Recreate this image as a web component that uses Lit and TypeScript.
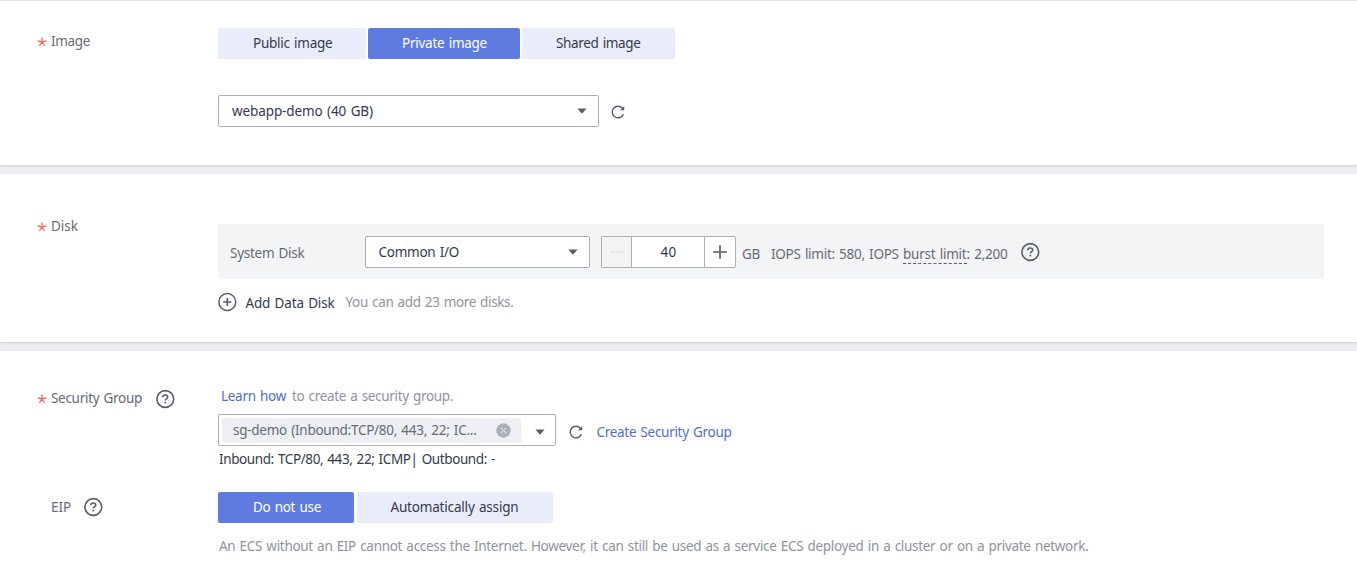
import { LitElement, html, css } from "lit";
import { customElement, property } from "lit/decorators.js";

/** One line of text whose tracking is adjusted so that it spans a given width. */
@customElement("fit-text")
class FitText extends LitElement {
  @property({ type: Number }) span = 0;
  static styles = css`
    :host { display: block; flex: none; height: 20px; line-height: 20px; white-space: pre; }
    .line { display: inline-block; word-spacing: 1px; }
  `;
  render() {
    return html`<span class="line"><slot></slot></span>`;
  }
  firstUpdated() {
    const line = this.renderRoot.querySelector(".line") as HTMLElement;
    const count = (this.textContent || "").length;
    const natural = line.getBoundingClientRect().width;
    this.style.width = `${this.span}px`;
    line.style.letterSpacing = `${(this.span - natural) / count}px`;
  }
}

const star = html`<svg class="star" width="10" height="10" viewBox="0 0 10 10">
  <path d="M5 5V.4M5 5L.6 3.8M5 5l4.4-1.2M5 5L2.3 9M5 5l2.7 4" fill="none" stroke="#f4655f" stroke-width="1.3"/>
</svg>`;

const help = html`<svg class="icon" width="20" height="20" viewBox="0 0 20 20" fill="none" stroke="#575d6c">
  <circle cx="10.3" cy="10" r="8.4" stroke-width="1.6"/>
  <path d="M7.8 8.2C7.8 6.8 8.9 6 10.3 6s2.4.8 2.4 2.1c0 1.6-2.4 1.8-2.4 3.4" stroke-width="1.6"/>
  <path d="M10.3 12.8v1.6" stroke-width="1.7"/>
</svg>`;

const refresh = html`<svg class="icon" width="14" height="14" viewBox="0 0 14 14" fill="none">
  <path d="M12.4 9.2A5.8 5.8 0 1 1 11.4 3.2" stroke="#575d6c" stroke-width="1.4"/>
  <path d="M13.2 1v4.2H9.2z" fill="#575d6c"/>
</svg>`;

const caret = html`<svg class="caret" width="10" height="6" viewBox="0 0 10 6"><path d="M.4.4h9.2L5 5.8z" fill="#575d6c"/></svg>`;

const plusCircle = html`<svg class="icon" width="20" height="20" viewBox="0 0 20 20" fill="none" stroke="#575d6c">
  <circle cx="10.3" cy="10" r="8.4" stroke-width="1.5"/>
  <path d="M10.3 6v8M6.3 10h8" stroke-width="1.6"/>
</svg>`;

const clear = html`<svg class="clear" width="15" height="15" viewBox="0 0 15 15">
  <circle cx="7.5" cy="7.5" r="7.2" fill="#adb0b8"/>
  <path d="M4.8 4.8l5.4 5.4M10.2 4.8l-5.4 5.4" stroke="#eef0f5" stroke-width="1"/>
</svg>`;

@customElement("app-root")
class AppRoot extends LitElement {
  static styles = css`
    :host {
      display: block; height: 580px; overflow: hidden; background: #ecedf2;
      font-family: "Noto Sans", sans-serif; font-size: 13.5px; color: #343a4c;
    }
    * { box-sizing: border-box; }
    svg { display: block; flex: none; }
    .panel { background: #fff; display: grid; grid-template-columns: 218px 1fr; align-content: start; box-shadow: 0 1px 2px rgba(0,0,0,.12); margin-bottom: 9px; }
    .image { height: 165px; border-top: 1px solid #e4e5e9; }
    .disk { height: 168px; }
    .network { height: 229px; margin: 0; }
    .label { display: flex; align-items: flex-start; padding-left: 37px; color: #676b76; }
    .star { margin: 6px 4px 0 0; }
    .image .label { padding-top: 30px; }
    .disk .label { padding-top: 42px; }
    .sg-label { padding-top: 37px; }
    .eip-label { padding: 5px 0 0 51px; }
    .sg-label .icon { margin: 1px 0 0 12.5px; }
    .eip-label .icon { margin-left: 11.5px; }
    .image .body { padding-top: 27px; }
    .disk .body { padding-top: 50px; }
    .tabs { display: flex; gap: 2px; }
    .tabs.wide { gap: 3px; }
    .tab { height: 31px; display: flex; padding-top: 5px; background: #e9edfa; border-radius: 2px; }
    .tab.on { background: #5e7ce0; color: #fff; }
    .public { width: 148px; padding-left: 35px; }
    .private { width: 152px; padding-left: 34px; }
    .shared { width: 153px; padding-left: 34px; }
    .none { width: 136px; padding-left: 35px; }
    .auto { width: 196px; padding-left: 33.5px; }
    .field { display: flex; align-items: center; justify-content: space-between; height: 32px; padding: 0 11.5px 0 13px; background: #fff; border: 1px solid #adb0b8; border-radius: 2px; }
    .field.source { width: 381px; }
    .row { display: flex; align-items: center; }
    .source-row { margin-top: 36px; gap: 12px; }
    .source-row .icon { margin-top: 2px; }
    .bar { width: 1106px; height: 55px; background: #f3f4f6; padding-left: 12px; color: #676b76; }
    .bar > .sys { margin: 3px 0 0; width: 135px; }
    .io { width: 225px; color: #343a4c; padding-left: 12.5px; }
    .stepper { display: flex; width: 135px; height: 32px; margin-left: 11px; border: 1px solid #adb0b8; border-radius: 2px; background: #fff; color: #343a4c; }
    .step { width: 30px; display: grid; place-items: center; }
    .minus { background: #f3f4f6; width: 29px; }
    .count { width: 74px; border: solid #adb0b8; border-width: 0 1px; display: grid; place-items: center; padding-left: 1px; }
    .unit { margin: 5px 11px 0 6px; }
    .limit { display: flex; margin-top: 5px; }
    .burst { border-bottom: 1px dashed #575d6c; height: 20px; }
    .bar > .icon { margin: 1px 0 0 12.5px; }
    .add { margin-top: 12px; height: 22px; }
    .add .icon { margin-left: -1px; }
    .add-name { margin: 2px 11px 0 8.5px; }
    .muted { color: #8f939d; }
    .sg-body { padding-top: 35px; height: 141px; }
    .learn { display: flex; gap: 6px; padding-left: 3px; }
    .link { color: #526ecc; }
    .sg-field { width: 338px; padding: 0 10.5px 0 3px; }
    .sg-field .caret { margin-top: 3px; }
    .sg-row { margin-top: 8px; }
    .tag { display: flex; align-items: center; justify-content: space-between; width: 299px; height: 25px; padding: 0 10px 0 11px; background: #edeff4; border-radius: 2px; color: #676b76; }
    .sg-row .icon { margin: 4px 14px 0 12.5px; }
    .sg-row .link { margin-top: 4px; }
    .rules { margin: 3px 0 0 1px; }
    .note { margin: 13px 0 0 1px; }
  `;

  render() {
    return html`
      <section class="panel image">
        <div class="label">${star}<fit-text span="39">Image</fit-text></div>
        <div class="body">
          <div class="tabs">
            <div class="tab public"><fit-text span="79.5">Public image</fit-text></div>
            <div class="tab on private"><fit-text span="85">Private image</fit-text></div>
            <div class="tab shared"><fit-text span="84.5">Shared image</fit-text></div>
          </div>
          <div class="row source-row">
            <div class="field source"><fit-text span="141">webapp-demo (40 GB)</fit-text>${caret}</div>
            ${refresh}
          </div>
        </div>
      </section>

      <section class="panel disk">
        <div class="label">${star}<fit-text span="27">Disk</fit-text></div>
        <div class="body">
          <div class="row bar">
            <div class="sys"><fit-text span="74.5">System Disk</fit-text></div>
            <div class="field io"><fit-text span="80.5">Common I/O</fit-text>${caret}</div>
            <div class="stepper">
              <div class="step minus"><svg width="14" height="14" viewBox="0 0 14 14"><path d="M0 7h14" stroke="#dfe1e6" stroke-width="1.4"/></svg></div>
              <div class="count"><fit-text span="16">40</fit-text></div>
              <div class="step"><svg width="14" height="14" viewBox="0 0 14 14"><path d="M0 7h14M7 0v14" stroke="#575d6c" stroke-width="1.6"/></svg></div>
            </div>
            <fit-text class="unit" span="18">GB</fit-text>
            <div class="limit">
              <fit-text span="132">IOPS limit: 580, IOPS </fit-text>
              <div class="burst"><fit-text span="63.5">burst limit</fit-text></div>
              <fit-text span="41">: 2,200</fit-text>
            </div>
            ${help}
          </div>
          <div class="row add">
            ${plusCircle}
            <fit-text class="add-name" span="89">Add Data Disk</fit-text>
            <fit-text class="muted" span="168">You can add 23 more disks.</fit-text>
          </div>
        </div>
      </section>

      <section class="panel network">
        <div class="label sg-label">${star}<fit-text span="91">Security Group</fit-text>${help}</div>
        <div class="sg-body">
          <div class="learn">
            <fit-text class="link" span="65">Learn how</fit-text>
            <fit-text class="muted" span="161">to create a security group.</fit-text>
          </div>
          <div class="row sg-row">
            <div class="field sg-field">
              <div class="tag"><fit-text span="243.5">sg-demo (Inbound:TCP/80, 443, 22; IC...</fit-text>${clear}</div>
              ${caret}
            </div>
            ${refresh}
            <fit-text class="link" span="135">Create Security Group</fit-text>
          </div>
          <fit-text class="rules" span="276">Inbound: TCP/80, 443, 22; ICMP| Outbound: -</fit-text>
        </div>
        <div class="label eip-label"><fit-text span="20">EIP</fit-text>${help}</div>
        <div class="eip-body">
          <div class="tabs wide">
            <div class="tab on none"><fit-text span="68">Do not use</fit-text></div>
            <div class="tab auto"><fit-text span="128">Automatically assign</fit-text></div>
          </div>
          <fit-text class="muted note" span="869.5">An ECS without an EIP cannot access the Internet. However, it can still be used as a service ECS deployed in a cluster or on a private network.</fit-text>
        </div>
      </section>
    `;
  }
}
